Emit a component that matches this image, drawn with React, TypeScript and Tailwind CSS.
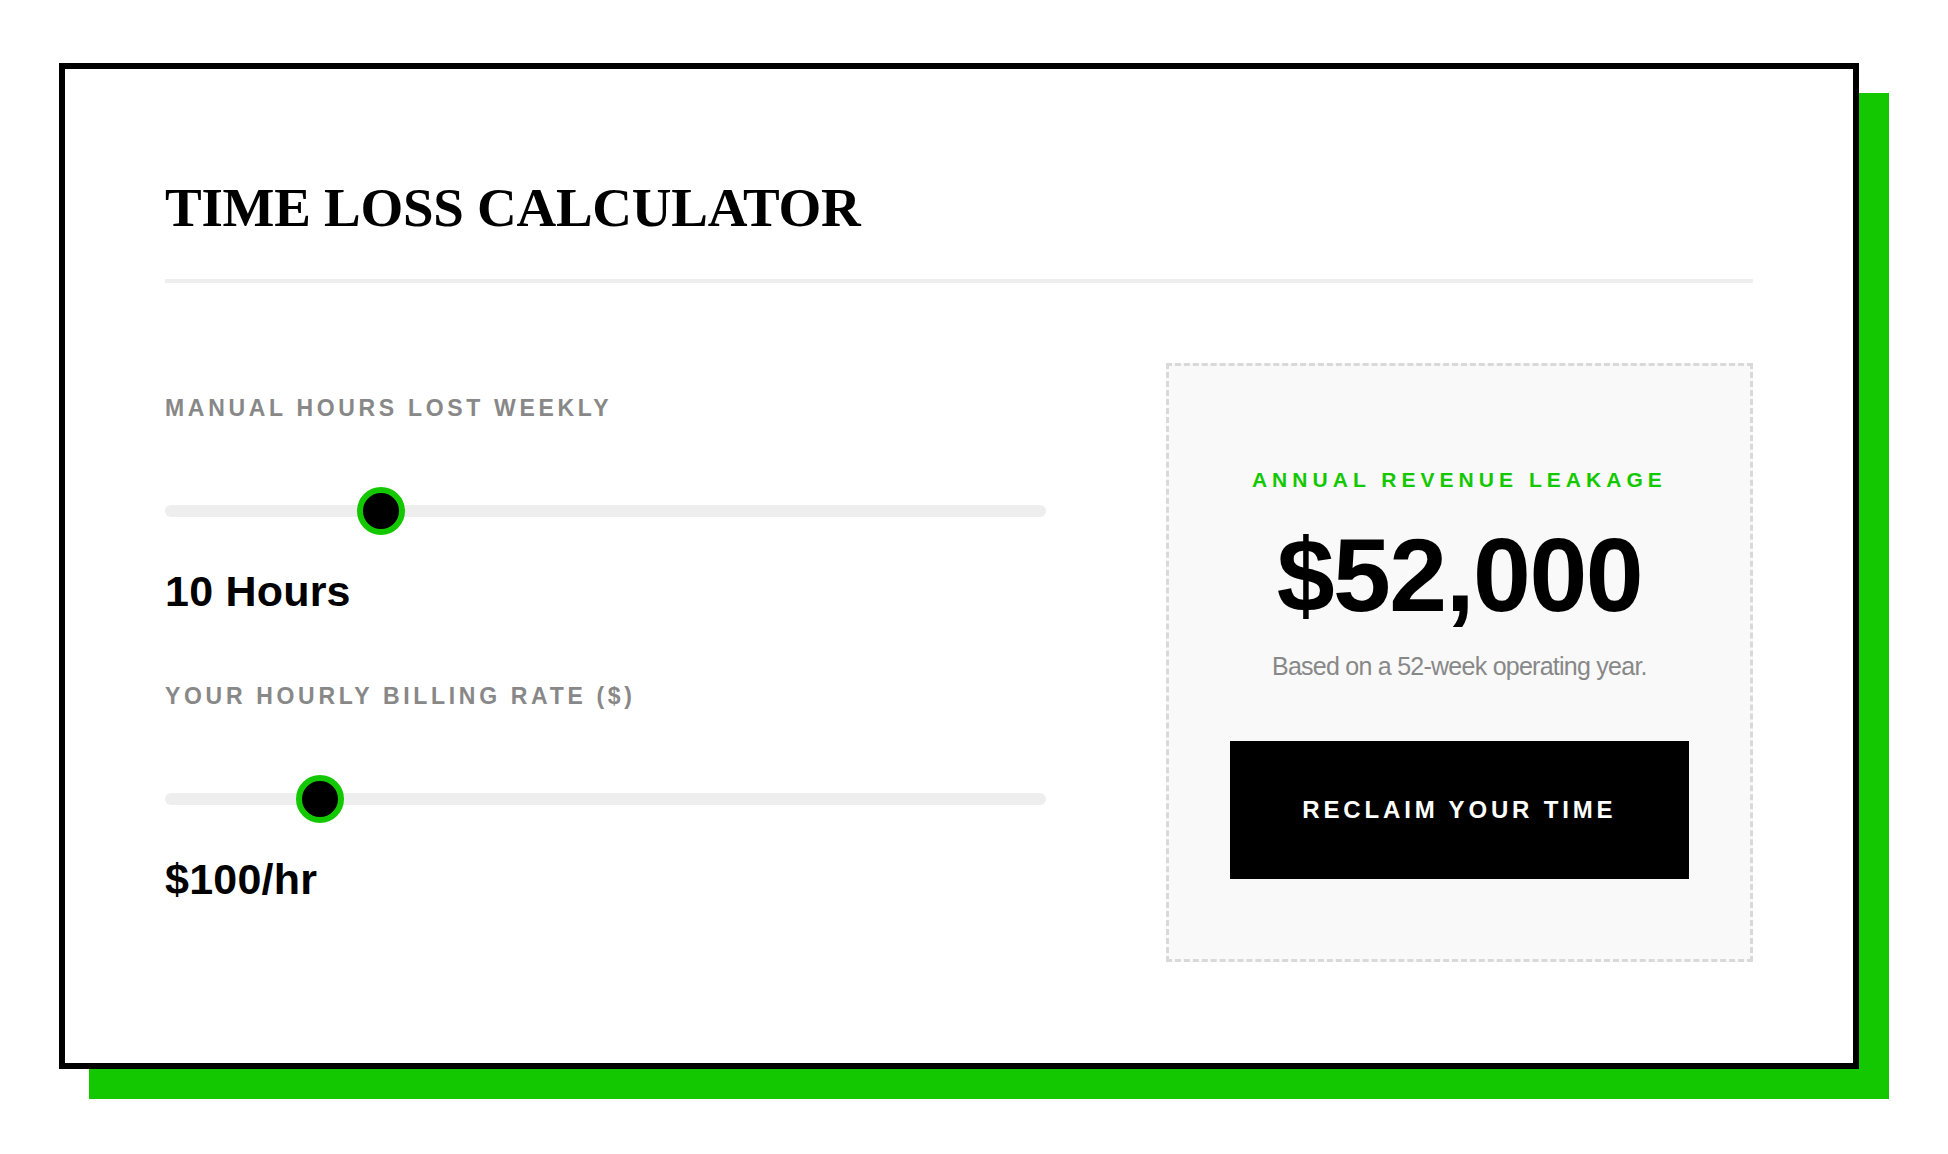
import React from "react";

const SANS = "font-['Liberation_Sans',Arial,Helvetica,sans-serif]";

function Slider({ pct }: { pct: number }) {
  return (
    <div className="relative mt-[67px] flex h-[48px] items-center">
      <div className="h-[12px] w-full rounded-full bg-[#eeeeee]" />
      <div
        className="absolute top-0 h-[48px] w-[48px] rounded-full border-[6px] border-[#14c800] bg-black"
        style={{ left: `calc(${pct} * (100% - 48px))` }}
      />
    </div>
  );
}

function Field({ label, pct, value }: { label: string; pct: number; value: string }) {
  return (
    <div>
      <div className="text-[23px] font-bold uppercase leading-none tracking-[0.16em] text-[#888888]">{label}</div>
      <Slider pct={pct} />
      <div className="mt-[35px] text-[43px] font-bold leading-none tracking-[0.005em] text-black">{value}</div>
    </div>
  );
}

export default function App() {
  const hours = 10;
  const rate = 100;
  const total = hours * rate * 52;
  const hoursPct = (hours - 1) / (40 - 1);
  const ratePct = (rate - 25) / (500 - 25);

  return (
    <div className={`min-h-screen bg-white pl-[59px] pt-[63px] pb-[55px] ${SANS}`}>
      <div className="w-[1800px] border-[6px] border-black bg-white px-[100px] pb-[101px] pt-[111px] shadow-[30px_30px_0_0_#14c800]">
        <h1 className="font-['Liberation_Serif','Times_New_Roman',serif] text-[55px] font-bold leading-none tracking-[-0.005em] text-black">
          TIME LOSS CALCULATOR
        </h1>
        <div className="mt-[44px] h-[4px] bg-[#eeeeee]" />
        <div className="mt-[80px] grid grid-cols-[1.5fr_1fr] items-start gap-x-[120px]">
          <div className="pt-[34px]">
            <Field label="Manual Hours Lost Weekly" pct={hoursPct} value={`${hours} Hours`} />
            <div className="mt-[72px]">
              <Field label="Your Hourly Billing Rate ($)" pct={ratePct} value={`$${rate}/hr`} />
            </div>
          </div>
          <div className="border-[3px] border-dashed border-[#d9d9d9] bg-[#f9f9f9] px-[61px] pb-[80px] pt-[103px] text-center">
            <div className="text-[21px] font-bold uppercase leading-none tracking-[0.24em] text-[#14c800]">
              Annual Revenue Leakage
            </div>
            <div className="mt-[33px] text-[104px] font-bold leading-none tracking-[-1.5px] text-black">
              ${total.toLocaleString("en-US")}
            </div>
            <div className="mt-[27px] text-[25px] leading-none tracking-[-0.03em] text-[#888888]">
              Based on a 52-week operating year.
            </div>
            <button className="mt-[62px] block w-full bg-black py-[57px] text-[24px] font-bold uppercase leading-[24px] tracking-[0.16em] text-white">
              Reclaim Your Time
            </button>
          </div>
        </div>
      </div>
    </div>
  );
}
